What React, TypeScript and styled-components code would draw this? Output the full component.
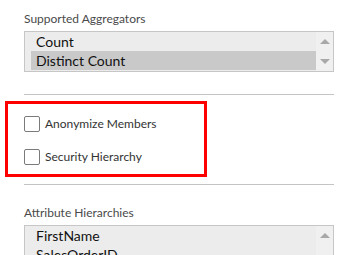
import React from "react";
import styled, { createGlobalStyle } from "styled-components";

const GlobalStyle = createGlobalStyle`
  html, body {
    margin: 0;
    padding: 0;
    background: #ffffff;
    overflow: hidden;
  }
  body {
    font-family: "Segoe UI", Lato, "Noto Sans", sans-serif;
  }
`;

interface ListProps {
  items: string[];
  selected?: number;
  height: number;
}

const ListBox: React.FC<ListProps> = ({ items, selected, height }) => {
  return (
    <StyledListBox $height={height}>
      <StyledItems>
        {items.map((item, i) => (
          <StyledItem key={item} $selected={i === selected}>
            {item}
          </StyledItem>
        ))}
      </StyledItems>
      <StyledScrollbar>
        <StyledArrow $dir="up" />
        <StyledArrow $dir="down" />
      </StyledScrollbar>
    </StyledListBox>
  );
};

const CheckRow: React.FC<{ label: string }> = ({ label }) => {
  return (
    <StyledCheckRow>
      <StyledCheckbox />
      <StyledCheckLabel>{label}</StyledCheckLabel>
    </StyledCheckRow>
  );
};

const App: React.FC = () => {
  return (
    <>
      <GlobalStyle />
      <StyledPage>
        <StyledLabel>Supported Aggregators</StyledLabel>
        <ListBox items={["Count", "Distinct Count"]} selected={1} height={41} />
        <StyledDivider $top={22} />
        <StyledHighlight>
          <CheckRow label="Anonymize Members" />
          <CheckRow label="Security Hierarchy" />
        </StyledHighlight>
        <StyledDivider $top={7} />
        <StyledLabel $top={20}>Attribute Hierarchies</StyledLabel>
        <ListBox items={["FirstName", "SalesOrderID"]} height={60} />
      </StyledPage>
    </>
  );
};
export default App;

const StyledPage = styled.div`
  display: flex;
  flex-direction: column;
  width: 357px;
  height: 255px;
  padding-top: 11px;
  box-sizing: border-box;
  overflow: hidden;
`;

const StyledLabel = styled.div<{ $top?: number }>`
  flex-shrink: 0;
  margin: ${(p) => p.$top ?? 0}px 0 0 24px;
  height: 20px;
  font-size: 12px;
  line-height: 16px;
  color: #4a4a4a;
`;

const StyledListBox = styled.div<{ $height: number }>`
  display: flex;
  flex-shrink: 0;
  margin-left: 24px;
  width: 310px;
  height: ${(p) => p.$height}px;
  border: 1px solid #c6c6c6;
  box-sizing: border-box;
  background: #ececec;
  overflow: hidden;
`;

const StyledItems = styled.div`
  flex: 1 1 auto;
  display: flex;
  flex-direction: column;
  padding-left: 6px;
`;

const StyledItem = styled.div<{ $selected: boolean }>`
  height: 19px;
  flex-shrink: 0;
  padding-left: 5px;
  font-size: 14px;
  line-height: 19px;
  color: #111111;
  background: ${(p) => (p.$selected ? "#c9c9c9" : "transparent")};
`;

const StyledScrollbar = styled.div`
  flex: 0 0 17px;
  display: flex;
  flex-direction: column;
  justify-content: space-between;
  align-items: center;
  padding: 7px 0;
  background: #f0f0f0;
`;

const StyledArrow = styled.div<{ $dir: "up" | "down" }>`
  width: 0;
  height: 0;
  border-left: 5px solid transparent;
  border-right: 5px solid transparent;
  ${(p) =>
    p.$dir === "up"
      ? "border-bottom: 5px solid #a8a8a8;"
      : "border-top: 5px solid #a8a8a8;"}
`;

const StyledDivider = styled.div<{ $top: number }>`
  margin: ${(p) => p.$top}px 0 0 24px;
  width: 310px;
  height: 1px;
  flex-shrink: 0;
  background: #c4c4c4;
`;

const StyledHighlight = styled.div`
  display: flex;
  flex-direction: column;
  gap: 17px;
  margin: 6px 0 0 5px;
  width: 202px;
  height: 76px;
  padding: 12px 0 0 16px;
  border: 3px solid #ff0000;
  box-sizing: border-box;
  flex-shrink: 0;
`;

const StyledCheckRow = styled.div`
  display: flex;
  align-items: center;
  height: 16px;
`;

const StyledCheckbox = styled.div`
  width: 16px;
  height: 16px;
  border: 1px solid #7a7a7a;
  border-radius: 2px;
  box-sizing: border-box;
  background: #ffffff;
  flex-shrink: 0;
`;

const StyledCheckLabel = styled.span`
  margin-left: 5px;
  font-size: 12px;
  line-height: 16px;
  color: #333333;
`;
